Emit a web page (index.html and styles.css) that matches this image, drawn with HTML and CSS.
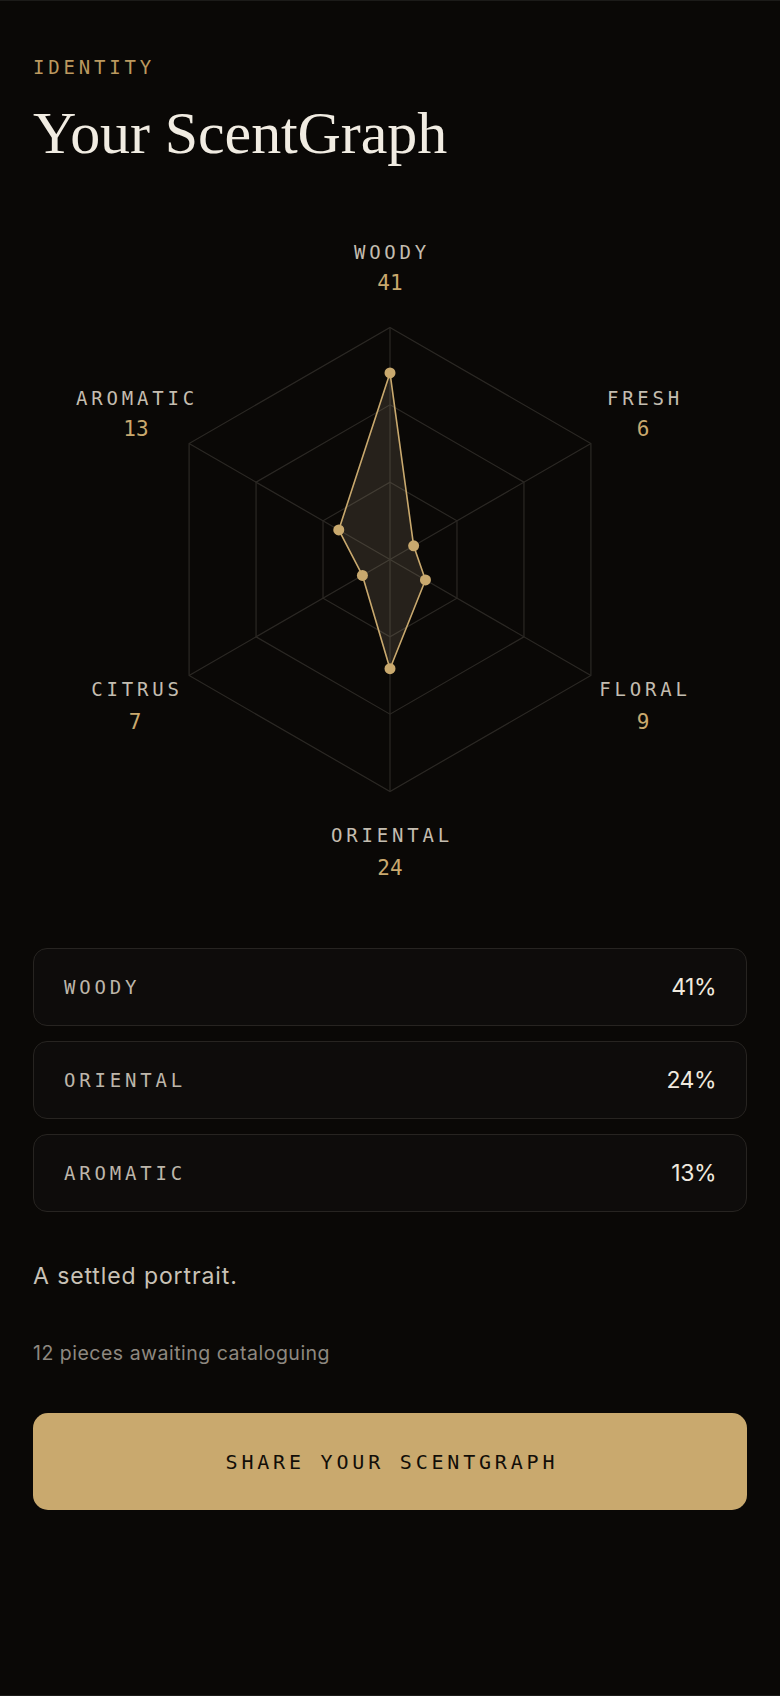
FILE: index.html
```html
<!DOCTYPE html>
<html lang="en">
<head>
<meta charset="utf-8">
<title>Your ScentGraph</title>
<link rel="stylesheet" href="styles.css">
</head>
<body>
<main class="screen">
  <p class="eyebrow">IDENTITY</p>
  <h1 class="title">Your ScentGraph</h1>

  <svg class="radar" viewBox="0 0 714 660" width="714" height="660" aria-label="ScentGraph radar chart">
    <g class="grid">
      <polygon points="357,97.5 557.9,213.5 557.9,445.5 357,561.5 156.1,445.5 156.1,213.5"/>
      <polygon points="357,174.83 490.95,252.17 490.95,406.83 357,484.17 223.05,406.83 223.05,252.17"/>
      <polygon points="357,252.17 423.97,290.83 423.97,368.17 357,406.83 290.03,368.17 290.03,290.83"/>
      <line x1="357" y1="329.5" x2="357" y2="97.5"/>
      <line x1="357" y1="329.5" x2="557.9" y2="213.5"/>
      <line x1="357" y1="329.5" x2="557.9" y2="445.5"/>
      <line x1="357" y1="329.5" x2="357" y2="561.5"/>
      <line x1="357" y1="329.5" x2="156.1" y2="445.5"/>
      <line x1="357" y1="329.5" x2="156.1" y2="213.5"/>
    </g>
    <polygon class="shape" points="357,142.95 380.64,315.85 392.46,349.98 357,438.7 329.42,345.43 305.77,299.92"/>
    <g class="dots">
      <circle cx="357" cy="142.95" r="5.5"/>
      <circle cx="380.64" cy="315.85" r="5.5"/>
      <circle cx="392.46" cy="349.98" r="5.5"/>
      <circle cx="357" cy="438.7" r="5.5"/>
      <circle cx="329.42" cy="345.43" r="5.5"/>
      <circle cx="305.77" cy="299.92" r="5.5"/>
    </g>
    <g class="axis-labels">
      <text class="axis-name" x="359" y="28.5">WOODY</text>
      <text class="axis-value" x="357" y="60">41</text>
      <text class="axis-name" x="612" y="174.7">FRESH</text>
      <text class="axis-value" x="610" y="206.3">6</text>
      <text class="axis-name" x="612" y="466">FLORAL</text>
      <text class="axis-value" x="610" y="498.5">9</text>
      <text class="axis-name" x="359" y="612.3">ORIENTAL</text>
      <text class="axis-value" x="357" y="645">24</text>
      <text class="axis-name" x="104" y="466">CITRUS</text>
      <text class="axis-value" x="102" y="498.5">7</text>
      <text class="axis-name" x="104" y="174.7">AROMATIC</text>
      <text class="axis-value" x="103" y="206.3">13</text>
    </g>
  </svg>

  <ul class="notes">
    <li class="note"><span class="note-name">WOODY</span><span class="note-pct">41%</span></li>
    <li class="note"><span class="note-name">ORIENTAL</span><span class="note-pct">24%</span></li>
    <li class="note"><span class="note-name">AROMATIC</span><span class="note-pct">13%</span></li>
  </ul>

  <p class="verdict">A settled portrait.</p>
  <p class="pending">12 pieces awaiting cataloguing</p>

  <button class="share" type="button">SHARE YOUR SCENTGRAPH</button>
</main>
</body>
</html>
```

FILE: styles.css
```css
* {
  box-sizing: border-box;
}

html,
body {
  margin: 0;
  padding: 0;
  background: #0a0806;
}

.screen {
  min-height: 1696px;
  padding: 57px 33px 0;
  border-top: 1px solid #1c1b19;
  border-bottom: 1px solid #1c1b19;
  background: #0a0806;
}

.eyebrow {
  margin: 0;
  font-family: "DejaVu Sans Mono", "Liberation Mono", monospace;
  font-size: 19px;
  line-height: 19px;
  letter-spacing: 3.8px;
  color: #bb995f;
}

.title {
  margin: 23.5px 0 0;
  font-family: "Liberation Serif", "DejaVu Serif", serif;
  font-weight: normal;
  font-size: 60px;
  line-height: 65px;
  letter-spacing: -0.1px;
  color: #f1ece2;
}

.radar {
  display: block;
  margin-top: 64px;
  width: 714px;
  height: 660px;
  overflow: visible;
}

.grid polygon,
.grid line {
  fill: none;
  stroke: #2b2824;
  stroke-width: 1.2;
}

.shape {
  fill: rgba(200, 180, 150, 0.15);
  stroke: #c9a96e;
  stroke-width: 1.6;
  stroke-linejoin: round;
}

.dots circle {
  fill: #c9a96e;
}

.axis-name {
  font-family: "DejaVu Sans Mono", "Liberation Mono", monospace;
  font-size: 19px;
  letter-spacing: 3.8px;
  fill: #c4bdb0;
  text-anchor: middle;
}

.axis-value {
  font-family: "DejaVu Sans Mono", "Liberation Mono", monospace;
  font-size: 21px;
  fill: #c9a96e;
  text-anchor: middle;
}

.notes {
  list-style: none;
  margin: 58px 0 0;
  padding: 0;
  display: flex;
  flex-direction: column;
  gap: 15px;
}

.note {
  height: 78px;
  display: flex;
  align-items: center;
  justify-content: space-between;
  padding: 0 30px;
  border: 1px solid #272421;
  border-radius: 14px;
  background: #0e0c0b;
}

.note-name {
  font-family: "DejaVu Sans Mono", "Liberation Mono", monospace;
  font-size: 19px;
  letter-spacing: 3.8px;
  color: #bdb6aa;
}

.note-pct {
  font-family: Inter, "Open Sans", sans-serif;
  font-size: 23px;
  letter-spacing: -0.5px;
  color: #efe9de;
}

.verdict {
  margin: 51px 0 0;
  font-family: Inter, "Open Sans", sans-serif;
  font-size: 23px;
  line-height: 1.2;
  letter-spacing: 0.9px;
  color: #c9c2b6;
}

.pending {
  margin: 52px 0 0;
  font-family: Inter, "Open Sans", sans-serif;
  font-size: 19.5px;
  line-height: 1.2;
  letter-spacing: 0.5px;
  color: #8e8880;
}

.share {
  display: block;
  width: 100%;
  height: 97px;
  margin-top: 48px;
  border: none;
  border-radius: 15px;
  background: #c9a96e;
  font-family: "DejaVu Sans Mono", "Liberation Mono", monospace;
  font-size: 20px;
  letter-spacing: 3.8px;
  padding: 0 0 0 3.8px;
  color: #120e08;
  cursor: pointer;
}
```
